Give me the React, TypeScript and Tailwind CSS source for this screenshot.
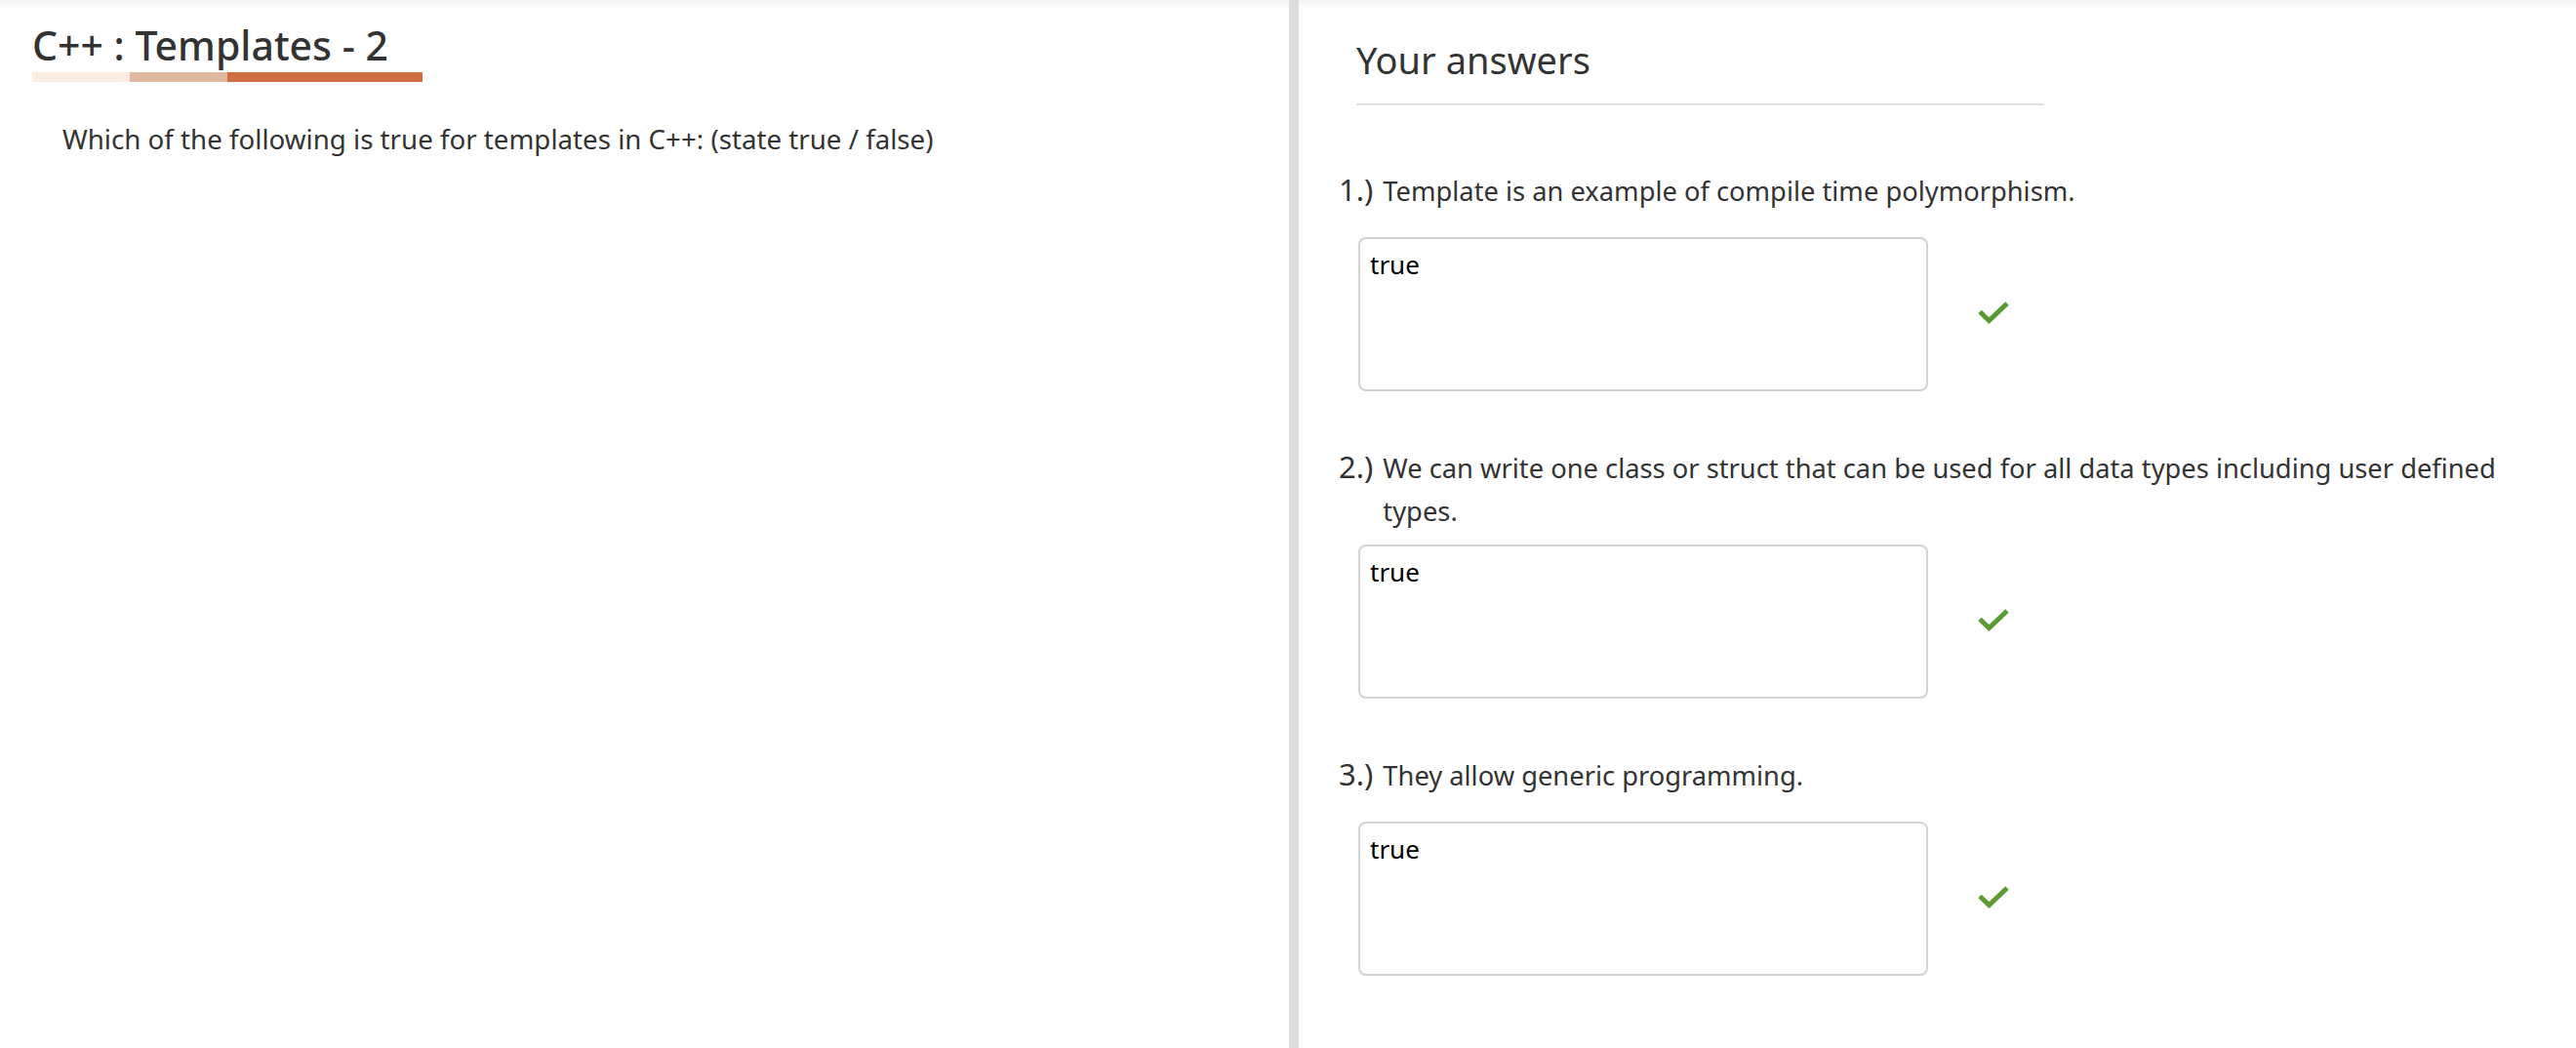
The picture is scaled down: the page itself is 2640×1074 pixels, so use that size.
import { Fragment } from "react";

const answers = [
  { text: "Template is an example of compile time polymorphism.", value: "true" },
  {
    text: "We can write one class or struct that can be used for all data types including user defined types.",
    value: "true",
  },
  { text: "They allow generic programming.", value: "true" },
];

function Check() {
  return (
    <svg width="34" height="26" viewBox="0 0 34 26" fill="none">
      <path d="M3 12.5 L12.5 21.5 L31 4" stroke="#5a9a32" strokeWidth="5" strokeLinecap="butt" strokeLinejoin="miter" />
    </svg>
  );
}

export default function App() {
  return (
    <div
      className="flex w-[2640px] h-[1074px] bg-white text-[#333333] shadow-[inset_0_8px_8px_-6px_rgba(0,0,0,0.07)]"
      style={{ fontFamily: '"Noto Sans", "Open Sans", sans-serif' }}
    >
      {/* question side */}
      <div className="w-[1321px] shrink-0 pt-[22px]">
        <div className="inline-block ml-[33px]">
          <h1 className="text-[41px] leading-[49px] font-medium text-[#333333]">C++ : Templates - 2</h1>
          <div className="flex mt-[3px] h-[10px] w-[400px]">
            <div className="w-[100px] bg-[#fcece3]"></div>
            <div className="w-[100px] bg-[#dfbaa1]"></div>
            <div className="w-[200px] bg-[#d06e41]"></div>
          </div>
        </div>
        <p className="mt-[33px] ml-[64px] text-[27.7px] leading-[38px]">
          Which of the following is true for templates in C++: (state true / false)
        </p>
      </div>

      <div className="w-[10px] shrink-0 bg-[#dddddd]"></div>

      {/* answers side */}
      <div className="flex-1 pt-[38px] pl-[41px] pr-[40px]">
        <h2 className="ml-[18px] w-[705px] text-[38px] leading-[46px] pb-[22px] border-b-2 border-[#e0e0e0]">
          Your answers
        </h2>
        <div className="mt-[64px] flex flex-col gap-[55px]">
          {answers.map((a, i) => (
            <Fragment key={i}>
              <div>
                <div className="flex items-baseline min-h-[59px] mb-[12px]">
                  <span className="shrink-0 mr-[10px] text-[31px] leading-[44px]">{i + 1}.)</span>
                  <span className="text-[27.3px] leading-[44px]">{a.text}</span>
                </div>
                <div className="flex items-center">
                  <div className="ml-[20px] w-[584px] h-[158px] border-2 border-[#d3d3d3] rounded-[8px] pt-[11px] px-[10px] text-[26px] leading-[31px] text-black">
                    {a.value}
                  </div>
                  <div className="ml-[50px] -mt-[4px]">
                    <Check />
                  </div>
                </div>
              </div>
            </Fragment>
          ))}
        </div>
      </div>
    </div>
  );
}
